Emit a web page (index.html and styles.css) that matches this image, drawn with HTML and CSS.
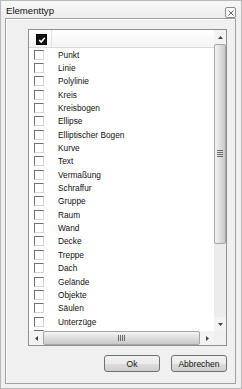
FILE: index.html
```html
<!DOCTYPE html>
<html lang="de">
<head>
  <meta charset="UTF-8">
  <title>Elementtyp</title>
  <link rel="stylesheet" href="styles.css">
</head>
<body>
  <div class="window">
    <div class="titlebar">
      <span class="title">Elementtyp</span>
      <span class="close">
        <svg width="6" height="6" viewBox="0 0 6 6"><path d="M0.5 0.5 L5.5 5.5 M5.5 0.5 L0.5 5.5" stroke="#666" stroke-width="1"/></svg>
      </span>
    </div>
    <div class="frame">
      <div class="listbox">
        <div class="list">
          <div class="header">
            <div class="head-check"><span class="checked"><svg width="8" height="8" viewBox="0 0 8 8"><path d="M1.2 4 L3.2 6 L6.8 1.8" stroke="#fff" stroke-width="1.6" fill="none"/></svg></span></div>
            <div class="head-label"></div>
          </div>
          <div class="rows">
            <div class="row"><span class="box"></span><span class="label">Punkt</span></div>
            <div class="row"><span class="box"></span><span class="label">Linie</span></div>
            <div class="row"><span class="box"></span><span class="label">Polylinie</span></div>
            <div class="row"><span class="box"></span><span class="label">Kreis</span></div>
            <div class="row"><span class="box"></span><span class="label">Kreisbogen</span></div>
            <div class="row"><span class="box"></span><span class="label">Ellipse</span></div>
            <div class="row"><span class="box"></span><span class="label">Elliptischer Bogen</span></div>
            <div class="row"><span class="box"></span><span class="label">Kurve</span></div>
            <div class="row"><span class="box"></span><span class="label">Text</span></div>
            <div class="row"><span class="box"></span><span class="label">Vermaßung</span></div>
            <div class="row"><span class="box"></span><span class="label">Schraffur</span></div>
            <div class="row"><span class="box"></span><span class="label">Gruppe</span></div>
            <div class="row"><span class="box"></span><span class="label">Raum</span></div>
            <div class="row"><span class="box"></span><span class="label">Wand</span></div>
            <div class="row"><span class="box"></span><span class="label">Decke</span></div>
            <div class="row"><span class="box"></span><span class="label">Treppe</span></div>
            <div class="row"><span class="box"></span><span class="label">Dach</span></div>
            <div class="row"><span class="box"></span><span class="label">Gelände</span></div>
            <div class="row"><span class="box"></span><span class="label">Objekte</span></div>
            <div class="row"><span class="box"></span><span class="label">Säulen</span></div>
            <div class="row"><span class="box"></span><span class="label">Unterzüge</span></div>
            <div class="row"><span class="box"></span></div>
          </div>
        </div>
        <div class="vscroll">
          <div class="arrow"><svg width="5" height="3" viewBox="0 0 5 3"><path d="M0 3 L2.5 0 L5 3 Z" fill="#444"/></svg></div>
          <div class="vthumb"><span class="grip"></span></div>
          <div class="track"></div>
          <div class="arrow"><svg width="5" height="3" viewBox="0 0 5 3"><path d="M0 0 L2.5 3 L5 0 Z" fill="#444"/></svg></div>
        </div>
        <div class="hscroll">
          <div class="harrow"><svg width="3" height="5" viewBox="0 0 3 5"><path d="M3 0 L0 2.5 L3 5 Z" fill="#444"/></svg></div>
          <div class="hthumb"><span class="hgrip"></span></div>
          <div class="harrow"><svg width="3" height="5" viewBox="0 0 3 5"><path d="M0 0 L3 2.5 L0 5 Z" fill="#444"/></svg></div>
        </div>
        <div class="corner"></div>
      </div>
      <div class="buttons">
        <button class="btn">Ok</button>
        <button class="btn">Abbrechen</button>
      </div>
    </div>
  </div>
</body>
</html>
```

FILE: styles.css
```css
body {
  margin: 0;
  background: #f0f0f0;
  font-family: "Liberation Sans", Arial, sans-serif;
}

.window {
  width: 242px;
  height: 389px;
  box-sizing: border-box;
  border: 1px solid #b9b9b9;
  background: #f0f0f0;
  display: flex;
  flex-direction: column;
}

.titlebar {
  height: 17px;
  display: flex;
  align-items: center;
  justify-content: space-between;
  padding: 0 5px 0 5px;
  background: linear-gradient(#f7f7f7, #eeeeee);
}

.title {
  font-size: 9.6px;
  color: #111;
  margin-top: 1px;
}

.close {
  width: 9px;
  height: 9px;
  margin-top: 6px;
  border: 1px solid #8c8c8c;
  border-radius: 2px;
  background: #f8f8f8;
  display: flex;
  align-items: center;
  justify-content: center;
}

.frame {
  margin: 0 5px 0 4px;
  height: 366px;
  box-sizing: border-box;
  border: 1px solid #a0a0a0;
  box-shadow: inset 1px 1px 0 #fff;
  display: flex;
  flex-direction: column;
  align-items: flex-end;
  padding: 10px 8px 0 0;
}

.listbox {
  width: 199px;
  height: 317px;
  box-sizing: border-box;
  border: 1px solid #8e8f8f;
  background: #fff;
  display: grid;
  grid-template-columns: 185px 12px;
  grid-template-rows: 301px 14px;
}

.list {
  overflow: hidden;
  display: flex;
  flex-direction: column;
}

.header {
  height: 18px;
  flex: none;
  display: flex;
  background: linear-gradient(#ffffff, #f3f4f6);
  border-bottom: 1px solid #d8dadd;
  box-sizing: border-box;
}

.head-check {
  width: 23px;
  border-right: 1px solid #e0e2e5;
  display: flex;
  align-items: flex-end;
  padding: 0 0 2px 7px;
  box-sizing: border-box;
}

.checked {
  width: 9px;
  height: 9px;
  background: #111;
  border: 1px solid #000;
  display: flex;
  align-items: center;
  justify-content: center;
}

.rows {
  display: flex;
  flex-direction: column;
}

.row {
  height: 13.35px;
  flex: none;
  display: flex;
  align-items: center;
  padding-left: 5px;
}

.box {
  width: 8px;
  height: 8px;
  flex: none;
  border: 1px solid;
  border-color: #6e6e6e #d4d4d4 #d4d4d4 #6e6e6e;
  background: #fff;
}

.label {
  margin-left: 14px;
  font-size: 8.3px;
  color: #111;
  white-space: nowrap;
}

.vscroll {
  grid-row: 1;
  grid-column: 2;
  display: flex;
  flex-direction: column;
  background: #ececec;
}

.arrow {
  height: 14px;
  flex: none;
  display: flex;
  align-items: center;
  justify-content: center;
  background: #f3f3f3;
}

.vthumb {
  height: 200px;
  flex: none;
  box-sizing: border-box;
  border: 1px solid #a6a6a6;
  border-radius: 2px;
  background: linear-gradient(90deg, #f4f4f4, #dcdcdc 55%, #c9c9c9);
  display: flex;
  align-items: center;
  justify-content: center;
  padding-top: 18px;
}

.grip {
  width: 6px;
  height: 7px;
  background: repeating-linear-gradient(#6a6a6a 0 1px, transparent 1px 2px);
}

.track {
  flex: 1;
}

.hscroll {
  grid-row: 2;
  grid-column: 1;
  display: flex;
  background: #ececec;
}

.harrow {
  width: 14px;
  flex: none;
  display: flex;
  align-items: center;
  justify-content: center;
  background: #f3f3f3;
}

.hthumb {
  flex: 1;
  box-sizing: border-box;
  border: 1px solid #a6a6a6;
  border-radius: 2px;
  background: linear-gradient(#f4f4f4, #dcdcdc 55%, #c9c9c9);
  display: flex;
  align-items: center;
  justify-content: center;
}

.hgrip {
  width: 7px;
  height: 6px;
  background: repeating-linear-gradient(90deg, #6a6a6a 0 1px, transparent 1px 2px);
}

.corner {
  grid-row: 2;
  grid-column: 2;
  background: #f0f0f0;
}

.buttons {
  display: flex;
  gap: 11px;
  margin-top: 9px;
}

.btn {
  width: 56px;
  height: 17px;
  padding: 0;
  border: 1px solid #707070;
  border-radius: 3px;
  background: linear-gradient(#f2f2f2, #ebebeb 50%, #dddddd 51%, #cfcfcf);
  font-family: "Liberation Sans", Arial, sans-serif;
  font-size: 8.5px;
  color: #111;
}
```
